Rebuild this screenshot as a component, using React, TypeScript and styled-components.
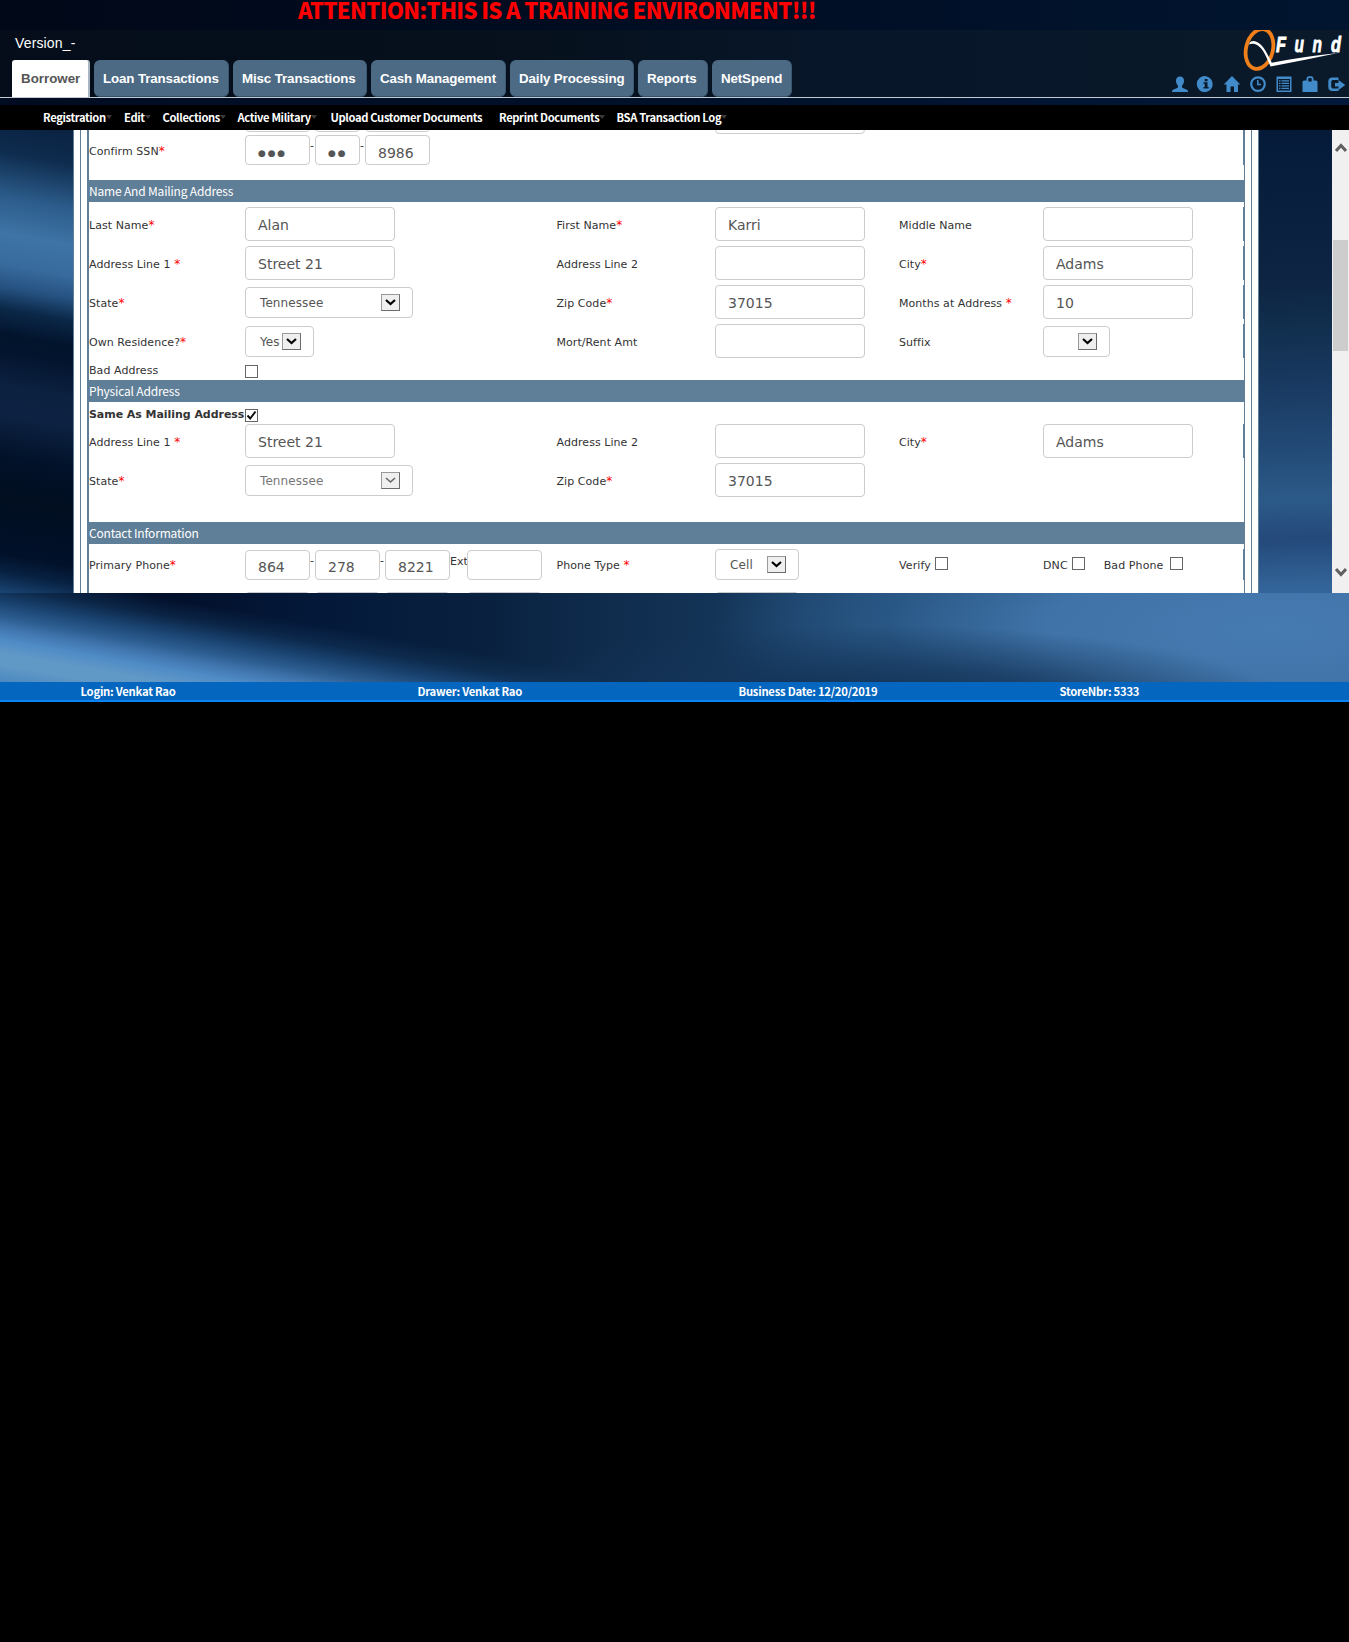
import React from "react";
import styled, { createGlobalStyle } from "styled-components";

const steel = "#5f7e97";
const source = `"Noto Sans CJK SC", "Noto Sans", sans-serif`;
const verdana = `"DejaVu Sans", Verdana, sans-serif`;
const arial = `"Liberation Sans", Arial, sans-serif`;

const GlobalStyle = createGlobalStyle`
  html, body { margin: 0; padding: 0; background: #000; }
  *, *::before, *::after { box-sizing: border-box; }
`;

const Page = styled.div`
  width: 1349px;
  height: 1642px;
  background: #000;
  font-family: ${verdana};
`;

const Stage = styled.div`
  display: flex;
  flex-direction: column;
  height: 702px;
  background: linear-gradient(90deg, #010818 0%, #010c20 40%, #011530 100%);
`;

const Banner = styled.div`
  height: 30px;
  padding-left: 298px;
  font: 900 22px/18px ${source};
  letter-spacing: -0.65px;
  color: #ff0000;
  white-space: nowrap;
`;

const Header = styled.header`
  display: flex;
  justify-content: space-between;
  height: 68px;
  border-bottom: 1px solid #c3cbd2;
  background: linear-gradient(90deg, #040d19 0%, #06111d 40%, #071629 62%, #0a1a2a 100%);
`;

const HeaderLeft = styled.div`
  display: flex;
  flex-direction: column;
  justify-content: space-between;
  padding-left: 12px;
`;

const Version = styled.div`
  padding: 5px 0 0 3px;
  font: 14px/16px ${arial};
  letter-spacing: 0.15px;
  color: #fff;
`;

const Tabs = styled.nav`
  display: flex;
  gap: 4px;
`;

const Tab = styled.div<{ $w: number; $active?: boolean }>`
  width: ${(p) => p.$w}px;
  height: 37px;
  padding-left: 9px;
  border-radius: ${(p) => (p.$active ? "3px 3px 0 0" : "6px")};
  background: ${(p) => (p.$active ? "#fff" : "#4c6a84")};
  border-right: ${(p) => (p.$active ? "2px solid #a9b6c2" : "1px solid #3b5870")};
  border-bottom: ${(p) => (p.$active ? "0" : "1px solid #33506a")};
  color: ${(p) => (p.$active ? "#555" : "#fff")};
  font: 700 13.33px/37px ${arial};
  letter-spacing: ${(p) => (p.$active ? "0" : "-0.12px")};
  white-space: nowrap;
`;

const HeaderRight = styled.div`
  display: flex;
  flex-direction: column;
  align-items: flex-end;
  width: 180px;
`;

const IconBar = styled.div`
  display: flex;
  gap: 10px;
  padding: 5px 5px 0 0;
`;

const Gutter = styled.div`
  height: 7px;
  background: linear-gradient(90deg, #010c22, #01112a 50%, #03183a);
`;

const Menu = styled.nav`
  display: flex;
  height: 25px;
  padding-left: 43px;
  background: #000;
  font: 700 11.2px/25px ${source};
  letter-spacing: -0.36px;
  color: #fff;
`;

const MenuItem = styled.div<{ $w: number }>`
  display: flex;
  align-items: center;
  flex: none;
  width: ${(p) => p.$w}px;
  white-space: nowrap;
`;

const Caret = styled.span`
  width: 0;
  height: 0;
  margin: -2px 0 0 0;
  border: 3px solid transparent;
  border-top: 4px solid #3a3a3a;
  border-bottom: 0;
`;

const Backdrop = styled.main`
  height: 552px;
  background:
    linear-gradient(190deg, #0a2242 0px, #0e2c4e 34px, #2c5c8b 78px, #3e74a6 114px, #386a9d 145px, #255180 167px, #0b2848 188px, #02132c 214px, #03142e 230px, #0c2140 264px, #0d2242 292px, #02122a 332px, #010e20 374px, #01112a 430px, #082243 448px, #1a4472 468px) 0 0 / 74px 463px no-repeat,
    linear-gradient(178deg, #041a38 0px, #08203e 70px, #0d2442 150px, #112f4e 200px, #18385f 250px, #224a76 320px, #2c5a88 370px, #24497a 410px, #34659a 460px) 1258px 0 / 75px 463px no-repeat,
    linear-gradient(190deg, rgba(20, 57, 95, 0) 0px, rgba(20, 57, 95, 0) 80px, rgba(20, 57, 95, 0.5) 98px, #1a4472 114px, #2c5c8f 127px, #4379b2 140px, #4f8bc6 150px, #6098c6 163px, #6098c6 175px, #4b88c0 192px) 0 463px / 600px 89px no-repeat,
    radial-gradient(ellipse 420px 90px at 880px 585px, rgba(15, 43, 74, 0.9) 0%, rgba(20, 52, 88, 0.75) 50%, rgba(30, 68, 106, 0) 100%),
    radial-gradient(ellipse 560px 170px at 1270px 500px, #467bb1 0%, #4073a8 40%, rgba(45, 92, 138, 0.7) 68%, rgba(30, 66, 106, 0) 100%),
    linear-gradient(90deg, #061a36 0%, #020f2a 12%, #04193a 24%, #09213f 36%, #0f2b4c 44%, #143558 54%, #235080 68%, #2b5a8b 100%);
`;

const Viewport = styled.div`
  display: flex;
  justify-content: space-between;
  height: 463px;
  padding-left: 73px;
  overflow: hidden;
`;

const Frame = styled.div`
  width: 1186px;
  padding: 0 6px;
  border: solid ${steel};
  border-width: 0 1px;
  background: #fff;
  height: 463px;
  overflow: hidden;
`;

const InnerFrame = styled.div`
  height: 463px;
  padding: 0 6px;
  border: solid ${steel};
  border-width: 0 1px;
`;

const Form = styled.div`
  height: 463px;
  border: solid ${steel};
  border-width: 0 1px 0 2px;
  overflow: hidden;
  color: #333;
  font-size: 11px;
`;

const Section = styled.h2`
  height: 22px;
  margin: 0;
  background: ${steel};
  color: #fff;
  font: 400 12px/22px ${source};
  letter-spacing: -0.18px;
`;

const Fields = styled.div<{ $top?: number; $bottom?: number }>`
  display: flex;
  flex-direction: column;
  gap: 5px;
  padding: ${(p) => p.$top ?? 5}px 0 ${(p) => p.$bottom ?? 0}px;
`;

const Row = styled.div<{ $h?: number; $edge?: boolean; $top?: number }>`
  display: grid;
  grid-template-columns: 156px 311.5px 158.5px 184px 144px 1fr;
  grid-template-rows: 100%;
  align-items: center;
  flex: none;
  height: ${(p) => p.$h ?? 34}px;
  margin-top: ${(p) => p.$top ?? 0}px;
  border-right: ${(p) => (p.$edge ? `1px solid ${steel}` : "0")};
`;

const Label = styled.label<{ $bold?: boolean; $dy?: number }>`
  padding-top: ${(p) => p.$dy ?? 3}px;
  font-weight: ${(p) => (p.$bold ? 700 : 400)};
  line-height: 14px;
  letter-spacing: ${(p) => (p.$bold ? "-0.05px" : "0.06px")};
  white-space: nowrap;
`;

const Star = styled.span`
  color: #ff0000;
  font-size: 12px;
`;

const Box = styled.div<{ $w?: number; $h?: number; $drop?: number }>`
  flex: none;
  width: ${(p) => p.$w ?? 150}px;
  height: ${(p) => p.$h ?? 34}px;
  padding: ${(p) => p.$drop ?? 1}px 0 0 12px;
  border: 1px solid #ccc;
  border-radius: 4px;
  background: #fff;
  color: #555;
  font-size: 14px;
  line-height: ${(p) => (p.$h ?? 34) - 2}px;
  white-space: nowrap;
`;

const Mask = styled.span`
  display: block;
  font-size: 9px;
  line-height: 27px;
  letter-spacing: 1.8px;
`;

const SelectBox = styled.div<{ $w: number; $muted?: boolean; $flush?: boolean }>`
  display: flex;
  align-items: center;
  justify-content: space-between;
  width: ${(p) => p.$w}px;
  height: 31px;
  margin-top: ${(p) => (p.$flush ? 0 : 1)}px;
  padding: 0 12px 0 14px;
  border: 1px solid #ccc;
  border-radius: 4px;
  color: ${(p) => (p.$muted ? "#777" : "#555")};
  font-size: 12px;
  letter-spacing: 0.1px;
  white-space: nowrap;
`;

const DropButton = styled.span`
  display: flex;
  align-items: center;
  justify-content: center;
  flex: none;
  width: 19px;
  height: 17px;
  border: 1px solid #6d6d6d;
  border-top-color: #9a9a9a;
  border-left-color: #9a9a9a;
  background: #efefef;
`;

const Group = styled.div<{ $dy?: number }>`
  display: flex;
  align-items: flex-start;
  padding-top: ${(p) => p.$dy ?? 0}px;
`;

const Dash = styled.span<{ $w?: number }>`
  width: ${(p) => p.$w ?? 5}px;
  padding-top: ${(p) => (p.$w ? 5 : 4)}px;
  line-height: 14px;
  white-space: nowrap;
`;

const Check = styled.span<{ $ml?: number }>`
  display: flex;
  align-items: center;
  justify-content: center;
  flex: none;
  width: 13px;
  height: 13px;
  margin-left: ${(p) => p.$ml ?? 0}px;
  border: 1px solid #666;
  background: #fff;
`;

const Inline = styled.div<{ $up?: number }>`
  display: flex;
  align-items: center;
  padding-bottom: ${(p) => p.$up ?? 0}px;
`;

const Nudge = styled.span<{ $ml?: number }>`
  margin: 5px 0 0 ${(p) => p.$ml ?? 0}px;
  line-height: 14px;
  letter-spacing: 0.1px;
`;

const ScrollBar = styled.div`
  display: flex;
  flex-direction: column;
  align-items: center;
  width: 17px;
  height: 463px;
  padding: 13px 0 16px;
  background: #f0f0f0;
`;

const Thumb = styled.div`
  width: 15px;
  height: 111px;
  margin: 87px 0 auto;
  background: #cdcdcd;
`;

const Footer = styled.footer`
  display: flex;
  height: 20px;
  padding-left: 80.5px;
  background: #0566bf;
  border-bottom: 2px solid #0a84f5;
  color: #fff;
  font: 700 11.3px/18px ${source};
  letter-spacing: -0.26px;
`;

const FooterItem = styled.div<{ $w: number }>`
  width: ${(p) => p.$w}px;
  white-space: nowrap;
`;

const Logo = () => (
  <svg width="110" height="41" viewBox="1239 30 110 41" style={{ display: "block" }}>
    <ellipse cx="1259.500" cy="49" rx="13.4" ry="20.200" transform="rotate(14 1259.5 49)" fill="none" stroke="#ee7f1a" strokeWidth="3.800" />
    <path d="M1249 44.500 Q1250 40.500 1255 41.200 C1262 43 1266 51 1271.800 62.800 Q1300 57 1338 53 Q1305 60 1270.500 66.500 C1265 53 1261 45 1253.500 43.800 Q1251 43.400 1249 44.500Z" fill="#fff" />
    <g fill="#fff" stroke="#fff" strokeWidth="0.900" fontFamily="Liberation Sans, Arial, sans-serif" fontWeight="700" fontStyle="italic" fontSize="22">
      <text transform="translate(1276 52) scale(0.74 1)">F</text>
      <text transform="translate(1294.500 52) scale(0.7 1)">u</text>
      <text transform="translate(1312.500 52) scale(0.7 1)">n</text>
      <text transform="translate(1331 52) scale(0.74 1)">d</text>
    </g>
  </svg>
);

const icons: Record<string, React.ReactNode> = {
  user: <path d="M8 0.500c2.600 0 4 1.700 4 4.300 0 2-.8 3.800-2 4.900v1.300c0 .5.3.8.8 1l3.700 1.600c1 .5 1.500 1 1.500 2.400H0c0-1.400.5-1.900 1.500-2.400L5.200 12c.5-.2.800-.5.800-1V9.700c-1.200-1.100-2-2.900-2-4.900C4 2.200 5.400.5 8 .5Z" />,
  info: <path fillRule="evenodd" d="M8 0.200a8 8 0 1 0 0 15.800A8 8 0 0 0 8 .2ZM6.700 3h2.800v2.200H6.700ZM5.500 6.300h4v4.700h1.200v1.500H5.500V11h1.200V7.800H5.500Z" />,
  home: <path d="M8 0 16.300 8.500H14V16H10V10.500H6.500V16H2.500V8.500H-.3Z" />,
  time: <path fillRule="evenodd" d="M8 .2a7.900 7.900 0 1 0 0 15.800A7.900 7.900 0 0 0 8 .2Zm0 2.200a5.700 5.700 0 1 1 0 11.400A5.700 5.700 0 0 1 8 2.400ZM7 4h1.500v3.800H11v1.400H7Z" />,
  list: <path fillRule="evenodd" d="M.5.500h15v15.500H.5ZM2 3v11.500h12V3ZM3 4.200h1.500v1.300H3Zm2.500 0H13v1.300H5.500ZM3 6.700h1.500V8H3Zm2.500 0H13V8H5.500ZM3 9.200h1.500v1.300H3Zm2.500 0H13v1.300H5.500ZM3 11.700h1.500V13H3Zm2.500 0H13V13H5.500Z" />,
  lock: <path fillRule="evenodd" d="M4.500 4.500V3Q4.500.3 7 .3h2q2.500 0 2.500 2.700v1.500H14q1.500 0 1.500 1.500v10H.5V6Q.5 4.500 2 4.500ZM6.300 3v2.500h3.400V3Q9.700 2 8.700 2H7.300Q6.300 2 6.300 3Z" />,
  exit: <path d="M10.500 1.500H4.500Q.3 1.500.3 5.500v5.500q0 4 4.200 4h6v-2.500H5Q3.200 12.500 3.200 10.500v-4.500Q3.200 4 5 4h5.500ZM10.500 4 17.300 9l-6.800 5v-3.500H7V7h3.500Z" />,
};

const Icon = ({ name }: { name: string }) => (
  <svg width="16" height="17" viewBox="0 0 16 17" fill="#428bca" style={{ display: "block", overflow: "visible" }}>
    {icons[name]}
  </svg>
);

const Chevron = ({ up }: { up?: boolean }) => (
  <svg width="12" height="10" viewBox="0 0 12 10" fill="none" stroke="#606060" strokeWidth="3" style={{ display: "block" }}>
    <path d={up ? "M1 8 6 2.500 11 8" : "M1 2 6 7.500 11 2"} />
  </svg>
);

const Field = ({ children }: { children?: React.ReactNode }) => <Box>{children}</Box>;

const Select = ({ w, muted, flush, children }: { w: number; muted?: boolean; flush?: boolean; children?: React.ReactNode }) => (
  <SelectBox $w={w} $muted={muted} $flush={flush}>
    <span>{children}</span>
    <DropButton>
      <svg width="11" height="7" viewBox="0 0 11 7" fill="none" stroke={muted ? "#666" : "#000"} strokeWidth={muted ? 1.6 : 2.2}>
        <path d="M1 1 5.500 5 10 1" />
      </svg>
    </DropButton>
  </SelectBox>
);

const Req = ({ children, gap }: { children: string; gap?: boolean }) => (
  <Label>
    {children}
    {gap ? " " : ""}
    <Star>*</Star>
  </Label>
);

const tabs: [string, number, boolean?][] = [
  ["Borrower", 78, true],
  ["Loan Transactions", 135],
  ["Misc Transactions", 134],
  ["Cash Management", 135],
  ["Daily Processing", 124],
  ["Reports", 70],
  ["NetSpend", 80],
];

const menu: [string, number, boolean][] = [
  ["Registration", 81, true],
  ["Edit", 38.5, true],
  ["Collections", 75, true],
  ["Active Military", 93, true],
  ["Upload Customer Documents", 168.5, false],
  ["Reprint Documents", 117.5, true],
  ["BSA Transaction Log", 120, true],
];

export default function App() {
  return (
    <Page>
      <GlobalStyle />
      <Stage>
        <Banner>ATTENTION:THIS IS A TRAINING ENVIRONMENT!!!</Banner>
        <Header>
          <HeaderLeft>
            <Version>Version_-</Version>
            <Tabs>
              {tabs.map(([name, w, active]) => (
                <Tab key={name} $w={w} $active={active}>{name}</Tab>
              ))}
            </Tabs>
          </HeaderLeft>
          <HeaderRight>
            <Logo />
            <IconBar>
              {Object.keys(icons).map((name) => <Icon key={name} name={name} />)}
            </IconBar>
          </HeaderRight>
        </Header>
        <Gutter />
        <Menu>
          {menu.map(([name, w, caret]) => (
            <MenuItem key={name} $w={w}>
              {name}
              {caret && <Caret />}
            </MenuItem>
          ))}
        </Menu>
        <Backdrop>
          <Viewport>
            <Frame>
              <InnerFrame>
                <Form>
                  <Row $top={-30} $h={34} $edge>
                    <span />
                    <Group>
                      <Box $w={65} $h={30} />
                      <Dash />
                      <Box $w={45} $h={30} />
                      <Dash />
                      <Box $w={65} $h={30} />
                    </Group>
                    <span />
                    <Field />
                    <span />
                    <span />
                  </Row>
                  <Row $h={31} $edge>
                    <Label $dy={4}>Confirm SSN<Star>*</Star></Label>
                    <Group $dy={1}>
                      <Box $w={65} $h={30} $drop={4}><Mask>●●●</Mask></Box>
                      <Dash>-</Dash>
                      <Box $w={45} $h={30} $drop={4}><Mask>●●</Mask></Box>
                      <Dash>-</Dash>
                      <Box $w={65} $h={30} $drop={3}>8986</Box>
                    </Group>
                  </Row>
                  <Fields $top={15}><Section>Name And Mailing Address</Section></Fields>
                  <Fields $bottom={1}>
                    <Row $edge>
                      <Req>Last Name</Req>
                      <Field>Alan</Field>
                      <Req>First Name</Req>
                      <Field>Karri</Field>
                      <Label>Middle Name</Label>
                      <Field />
                    </Row>
                    <Row $edge>
                      <Req gap>Address Line 1</Req>
                      <Field>Street 21</Field>
                      <Label>Address Line 2</Label>
                      <Field />
                      <Req>City</Req>
                      <Field>Adams</Field>
                    </Row>
                    <Row $edge>
                      <Req>State</Req>
                      <Select w={168}>Tennessee</Select>
                      <Req>Zip Code</Req>
                      <Field>37015</Field>
                      <Req gap>Months at Address</Req>
                      <Field>10</Field>
                    </Row>
                    <Row $edge>
                      <Req>Own Residence?</Req>
                      <Select w={69}>Yes</Select>
                      <Label>Mort/Rent Amt</Label>
                      <Field />
                      <Label>Suffix</Label>
                      <Select w={67} />
                    </Row>
                    <Row $h={16}>
                      <Inline><Label $dy={0}>Bad Address</Label></Inline>
                      <Inline><Check /></Inline>
                    </Row>
                  </Fields>
                  <Section>Physical Address</Section>
                  <Fields $top={5} $bottom={25}>
                    <Row $h={17}>
                      <Inline $up={2}><Label $bold $dy={0}>Same As Mailing Address</Label></Inline>
                      <Inline>
                        <Check>
                          <svg width="11" height="11" viewBox="0 0 11 11" fill="none" stroke="#111" strokeWidth="2">
                            <path d="M1.500 5.500 4.200 8.500 9.500 1.500" />
                          </svg>
                        </Check>
                      </Inline>
                    </Row>
                    <Row $edge $top={-5}>
                      <Req gap>Address Line 1</Req>
                      <Field>Street 21</Field>
                      <Label>Address Line 2</Label>
                      <Field />
                      <Req>City</Req>
                      <Field>Adams</Field>
                    </Row>
                    <Row>
                      <Req>State</Req>
                      <Select w={168} muted>Tennessee</Select>
                      <Req>Zip Code</Req>
                      <Field>37015</Field>
                    </Row>
                  </Fields>
                  <Section>Contact Information</Section>
                  <Fields>
                    <Row $h={31} $edge>
                      <Label $dy={2}>Primary Phone<Star>*</Star></Label>
                      <Group $dy={1}>
                        <Box $w={65} $h={30} $drop={2}>864</Box>
                        <Dash>-</Dash>
                        <Box $w={65} $h={30} $drop={2}>278</Box>
                        <Dash>-</Dash>
                        <Box $w={65} $h={30} $drop={2}>8221</Box>
                        <Dash $w={17}>Ext</Dash>
                        <Box $w={75} $h={30} />
                      </Group>
                      <Label $dy={2}>Phone Type <Star>*</Star></Label>
                      <Select w={84} flush>Cell</Select>
                      <Inline $up={2}><Nudge>Verify</Nudge><Check $ml={4} /></Inline>
                      <Inline $up={2}>
                        <Nudge>DNC</Nudge><Check $ml={4} />
                        <Nudge $ml={19}>Bad Phone</Nudge><Check $ml={7} />
                      </Inline>
                    </Row>
                    <Row $h={30} $top={7}>
                      <span />
                      <Group>
                        <Box $w={65} $h={30} />
                        <Dash />
                        <Box $w={65} $h={30} />
                        <Dash />
                        <Box $w={65} $h={30} />
                        <Dash $w={17} />
                        <Box $w={75} $h={30} />
                      </Group>
                      <span />
                      <Box $w={84} $h={30} />
                    </Row>
                  </Fields>
                </Form>
              </InnerFrame>
            </Frame>
            <ScrollBar>
              <Chevron up />
              <Thumb />
              <Chevron />
            </ScrollBar>
          </Viewport>
        </Backdrop>
        <Footer>
          <FooterItem $w={337}>Login: Venkat Rao</FooterItem>
          <FooterItem $w={321}>Drawer: Venkat Rao</FooterItem>
          <FooterItem $w={321}>Business Date: 12/20/2019</FooterItem>
          <FooterItem $w={200}>StoreNbr: 5333</FooterItem>
        </Footer>
      </Stage>
    </Page>
  );
}
